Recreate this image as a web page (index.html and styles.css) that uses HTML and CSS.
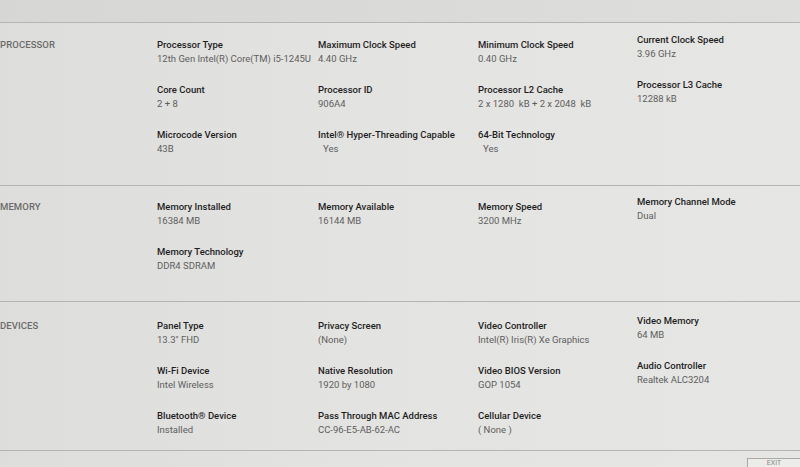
FILE: index.html
```html
<!DOCTYPE html>
<html>
<head>
<meta charset="utf-8">
<link rel="stylesheet" href="styles.css">
</head>
<body>
<div class="screen">
  <div class="topband"></div>
  <section class="sec sec-proc">
    <div class="sec-name">PROCESSOR</div>
    <div class="grid">
      <div class="item"><div class="k">Processor Type</div><div class="v">12th Gen Intel(R) Core(TM) i5-1245U</div></div>
      <div class="item"><div class="k">Maximum Clock Speed</div><div class="v">4.40 GHz</div></div>
      <div class="item"><div class="k">Minimum Clock Speed</div><div class="v">0.40 GHz</div></div>
      <div class="item up"><div class="k">Current Clock Speed</div><div class="v">3.96 GHz</div></div>
      <div class="item"><div class="k">Core Count</div><div class="v">2 + 8</div></div>
      <div class="item"><div class="k">Processor ID</div><div class="v">906A4</div></div>
      <div class="item"><div class="k">Processor L2 Cache</div><div class="v">2 x 1280&nbsp; kB + 2 x 2048&nbsp; kB</div></div>
      <div class="item up"><div class="k">Processor L3 Cache</div><div class="v">12288 kB</div></div>
      <div class="item"><div class="k">Microcode Version</div><div class="v">43B</div></div>
      <div class="item"><div class="k">Intel® Hyper-Threading Capable</div><div class="v indent">Yes</div></div>
      <div class="item"><div class="k">64-Bit Technology</div><div class="v indent">Yes</div></div>
    </div>
  </section>
  <section class="sec sec-mem">
    <div class="sec-name">MEMORY</div>
    <div class="grid">
      <div class="item"><div class="k">Memory Installed</div><div class="v">16384 MB</div></div>
      <div class="item"><div class="k">Memory Available</div><div class="v">16144 MB</div></div>
      <div class="item"><div class="k">Memory Speed</div><div class="v">3200 MHz</div></div>
      <div class="item up"><div class="k">Memory Channel Mode</div><div class="v">Dual</div></div>
      <div class="item"><div class="k">Memory Technology</div><div class="v">DDR4 SDRAM</div></div>
    </div>
  </section>
  <section class="sec sec-dev">
    <div class="sec-name">DEVICES</div>
    <div class="grid">
      <div class="item"><div class="k">Panel Type</div><div class="v">13.3" FHD</div></div>
      <div class="item"><div class="k">Privacy Screen</div><div class="v">(None)</div></div>
      <div class="item"><div class="k">Video Controller</div><div class="v">Intel(R) Iris(R) Xe Graphics</div></div>
      <div class="item up"><div class="k">Video Memory</div><div class="v">64 MB</div></div>
      <div class="item"><div class="k">Wi-Fi Device</div><div class="v">Intel Wireless</div></div>
      <div class="item"><div class="k">Native Resolution</div><div class="v">1920 by 1080</div></div>
      <div class="item"><div class="k">Video BIOS Version</div><div class="v">GOP 1054</div></div>
      <div class="item up"><div class="k">Audio Controller</div><div class="v">Realtek ALC3204</div></div>
      <div class="item"><div class="k">Bluetooth® Device</div><div class="v">Installed</div></div>
      <div class="item"><div class="k">Pass Through MAC Address</div><div class="v">CC-96-E5-AB-62-AC</div></div>
      <div class="item"><div class="k">Cellular Device</div><div class="v">( None )</div></div>
    </div>
  </section>
  <div class="footer"><div class="exit">EXIT</div></div>
</div>
</body>
</html>
```
FILE: styles.css
```css
html, body {
  margin: 0;
  padding: 0;
  width: 800px;
  height: 467px;
  overflow: hidden;
}
body {
  font-family: Roboto, "Liberation Sans", sans-serif;
  background: #dcdcda;
}
.screen {
  width: 800px;
  height: 467px;
  background: linear-gradient(90deg, #dddddb 0%, #e3e3e1 45%, #e6e6e4 100%);
}
.topband {
  height: 22px;
  background: linear-gradient(90deg, #d6d6d4, #dededc);
  border-bottom: 1px solid #b4b4b2;
}
.sec {
  display: flex;
  border-bottom: 1px solid #b4b4b2;
}
.sec-proc { padding-top: 15px; padding-bottom: 29px; }
.sec-mem { padding-top: 14px; padding-bottom: 28px; }
.sec-dev { padding-top: 17px; padding-bottom: 13px; }
.sec-name {
  flex: none;
  width: 157px;
  font-size: 9.5px;
  line-height: 14px;
  font-weight: 500;
  color: #6a6a6a;
  letter-spacing: 0.1px;
}
.grid {
  display: grid;
  grid-template-columns: 161px 160px 159px 160px;
  grid-auto-rows: 28px;
  row-gap: 17px;
}
.item {
  display: flex;
  flex-direction: column;
}
.item.up {
  transform: translateY(-5px);
}
.k {
  font-size: 9.5px;
  line-height: 14px;
  font-weight: 500;
  color: #1e1e1e;
  white-space: nowrap;
}
.v {
  font-size: 9.5px;
  line-height: 14px;
  color: #5e5e5e;
  white-space: nowrap;
}
.v.indent { padding-left: 5px; }
.footer {
  display: flex;
  justify-content: flex-end;
  padding-top: 7px;
}
.exit {
  width: 52px;
  height: 10px;
  border: 1px solid #a8a8a6;
  border-right: none;
  border-bottom: none;
  background: #ececea;
  font-size: 7px;
  color: #8a8a8a;
  text-align: center;
  line-height: 9px;
}
```
